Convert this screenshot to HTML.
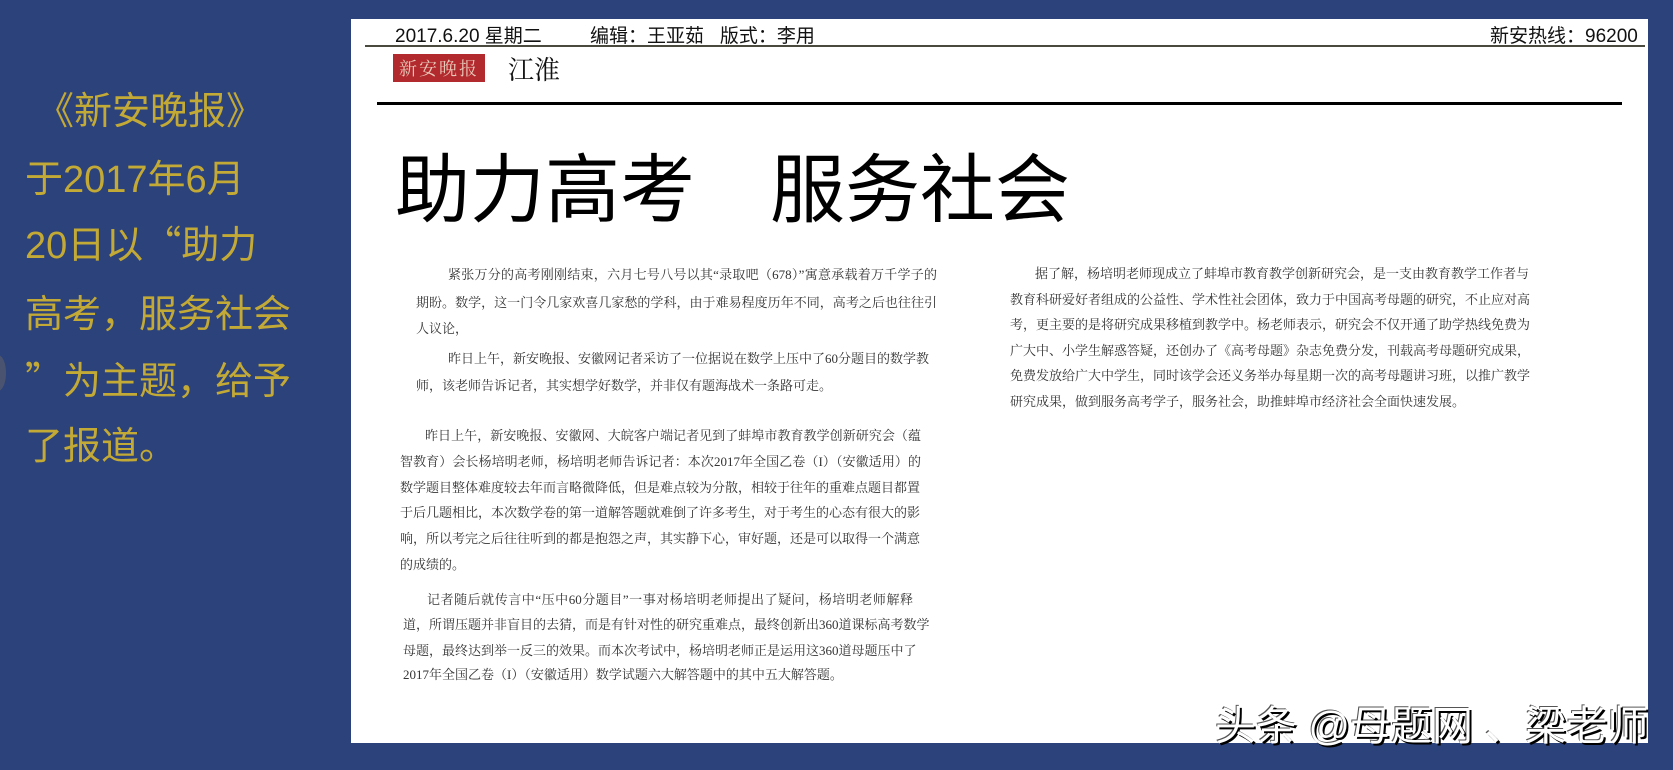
<!DOCTYPE html>
<html><head><meta charset="utf-8"><style>
*{margin:0;padding:0}
body{width:1673px;height:770px;background:#2c427a;position:relative;overflow:hidden;font-family:"Liberation Sans","Noto Sans CJK SC",sans-serif}
.a{position:absolute;white-space:nowrap}
.gold{color:#c3a935;font-size:38px;left:25px}
.q{font-family:"Noto Sans CJK SC",sans-serif}
.paper{position:absolute;left:351px;top:19px;width:1297px;height:724px;background:#fff}
.l{position:absolute;font-family:"Liberation Serif","Noto Serif CJK SC","Noto Sans CJK SC",serif;font-size:13px;color:#333;white-space:nowrap;text-align:justify;text-align-last:justify;line-height:16px}
.e{text-align-last:left}
</style></head><body>
<div class="a gold" style="top:80px;left:36px">《新安晚报》</div>
<div class="a gold" style="top:148px">于2017年6月</div>
<div class="a gold" style="top:214px">20日以<span class="q">“</span>助力</div>
<div class="a gold" style="top:283px">高考，服务社会</div>
<div class="a gold" style="top:350px"><span class="q">”</span>为主题，给予</div>
<div class="a gold" style="top:415px">了报道。</div>
<div class="a" style="left:-10px;top:355px;width:16px;height:36px;border-radius:50%;background:#4a5470"></div>

<div class="paper"></div>
<div class="a" style="left:395px;top:21px;font-size:19px;color:#111">2017.6.20 星期二</div>
<div class="a" style="left:590px;top:21px;font-size:19px;color:#111">编辑<span class="q">：</span>王亚茹&nbsp;&nbsp;&nbsp;版式<span class="q">：</span>李用</div>
<div class="a" style="left:1490px;top:21px;font-size:19px;color:#111">新安热线<span class="q">：</span>96200</div>
<div class="a" style="left:365px;top:45px;width:1280px;height:2px;background:#4a4a3e"></div>
<div class="a" style="left:393px;top:54px;width:92px;height:28px;background:#b22a2e;color:#e8c8b8;font-family:'Noto Serif CJK SC',serif;font-size:18px;line-height:28px;text-align:center;letter-spacing:2px">新安晚报</div>
<div class="a" style="left:508px;top:50px;font-size:26px;color:#111;font-family:'Noto Serif CJK SC',serif">江淮</div>
<div class="a" style="left:377px;top:102px;width:1245px;height:3px;background:#000"></div>
<div class="a" style="left:395px;top:140px;font-size:75px;color:#000;line-height:100px">助力高考　服务社会</div>

<div class="l" style="left:448px;top:267px;width:489px">紧张万分的高考刚刚结束，六月七号八号以其“录取吧（678）”寓意承载着万千学子的</div>
<div class="l" style="left:416px;top:295px;width:521px">期盼。数学，这一门令几家欢喜几家愁的学科，由于难易程度历年不同，高考之后也往往引</div>
<div class="l e" style="left:416px;top:321px">人议论，</div>
<div class="l" style="left:448px;top:351px;width:476px">昨日上午，新安晚报、安徽网记者采访了一位据说在数学上压中了60分题目的数学教</div>
<div class="l e" style="left:416px;top:378px">师，该老师告诉记者，其实想学好数学，并非仅有题海战术一条路可走。</div>

<div class="l" style="left:425px;top:428px;width:496px">昨日上午，新安晚报、安徽网、大皖客户端记者见到了蚌埠市教育教学创新研究会（蕴</div>
<div class="l" style="left:400px;top:454px;width:521px">智教育）会长杨培明老师，杨培明老师告诉记者：本次2017年全国乙卷（I）（安徽适用）的</div>
<div class="l" style="left:400px;top:480px;width:516px">数学题目整体难度较去年而言略微降低，但是难点较为分散，相较于往年的重难点题目都置</div>
<div class="l" style="left:400px;top:505px;width:516px">于后几题相比，本次数学卷的第一道解答题就难倒了许多考生，对于考生的心态有很大的影</div>
<div class="l" style="left:400px;top:531px;width:516px">响，所以考完之后往往听到的都是抱怨之声，其实静下心，审好题，还是可以取得一个满意</div>
<div class="l e" style="left:400px;top:557px">的成绩的。</div>

<div class="l" style="left:427px;top:592px;width:486px">记者随后就传言中“压中60分题目”一事对杨培明老师提出了疑问，杨培明老师解释</div>
<div class="l" style="left:403px;top:617px;width:518px">道，所谓压题并非盲目的去猜，而是有针对性的研究重难点，最终创新出360道课标高考数学</div>
<div class="l" style="left:403px;top:643px;width:505px">母题，最终达到举一反三的效果。而本次考试中，杨培明老师正是运用这360道母题压中了</div>
<div class="l e" style="left:403px;top:667px">2017年全国乙卷（I）（安徽适用）数学试题六大解答题中的其中五大解答题。</div>

<div class="l" style="left:1035px;top:266px;width:494px">据了解，杨培明老师现成立了蚌埠市教育教学创新研究会，是一支由教育教学工作者与</div>
<div class="l" style="left:1010px;top:292px;width:519px">教育科研爱好者组成的公益性、学术性社会团体，致力于中国高考母题的研究，不止应对高</div>
<div class="l" style="left:1010px;top:317px;width:519px">考，更主要的是将研究成果移植到教学中。杨老师表示，研究会不仅开通了助学热线免费为</div>
<div class="l" style="left:1010px;top:343px;width:519px">广大中、小学生解惑答疑，还创办了《高考母题》杂志免费分发，刊载高考母题研究成果，</div>
<div class="l" style="left:1010px;top:368px;width:519px">免费发放给广大中学生，同时该学会还义务举办每星期一次的高考母题讲习班，以推广教学</div>
<div class="l e" style="left:1010px;top:394px">研究成果，做到服务高考学子，服务社会，助推蚌埠市经济社会全面快速发展。</div>

<div class="a" style="left:1215px;top:692px;font-size:41px;color:#fff;text-shadow:2px 2px 0 #000,-1px -1px 0 #555">头条 @母题网 、梁老师</div>
</body></html>
